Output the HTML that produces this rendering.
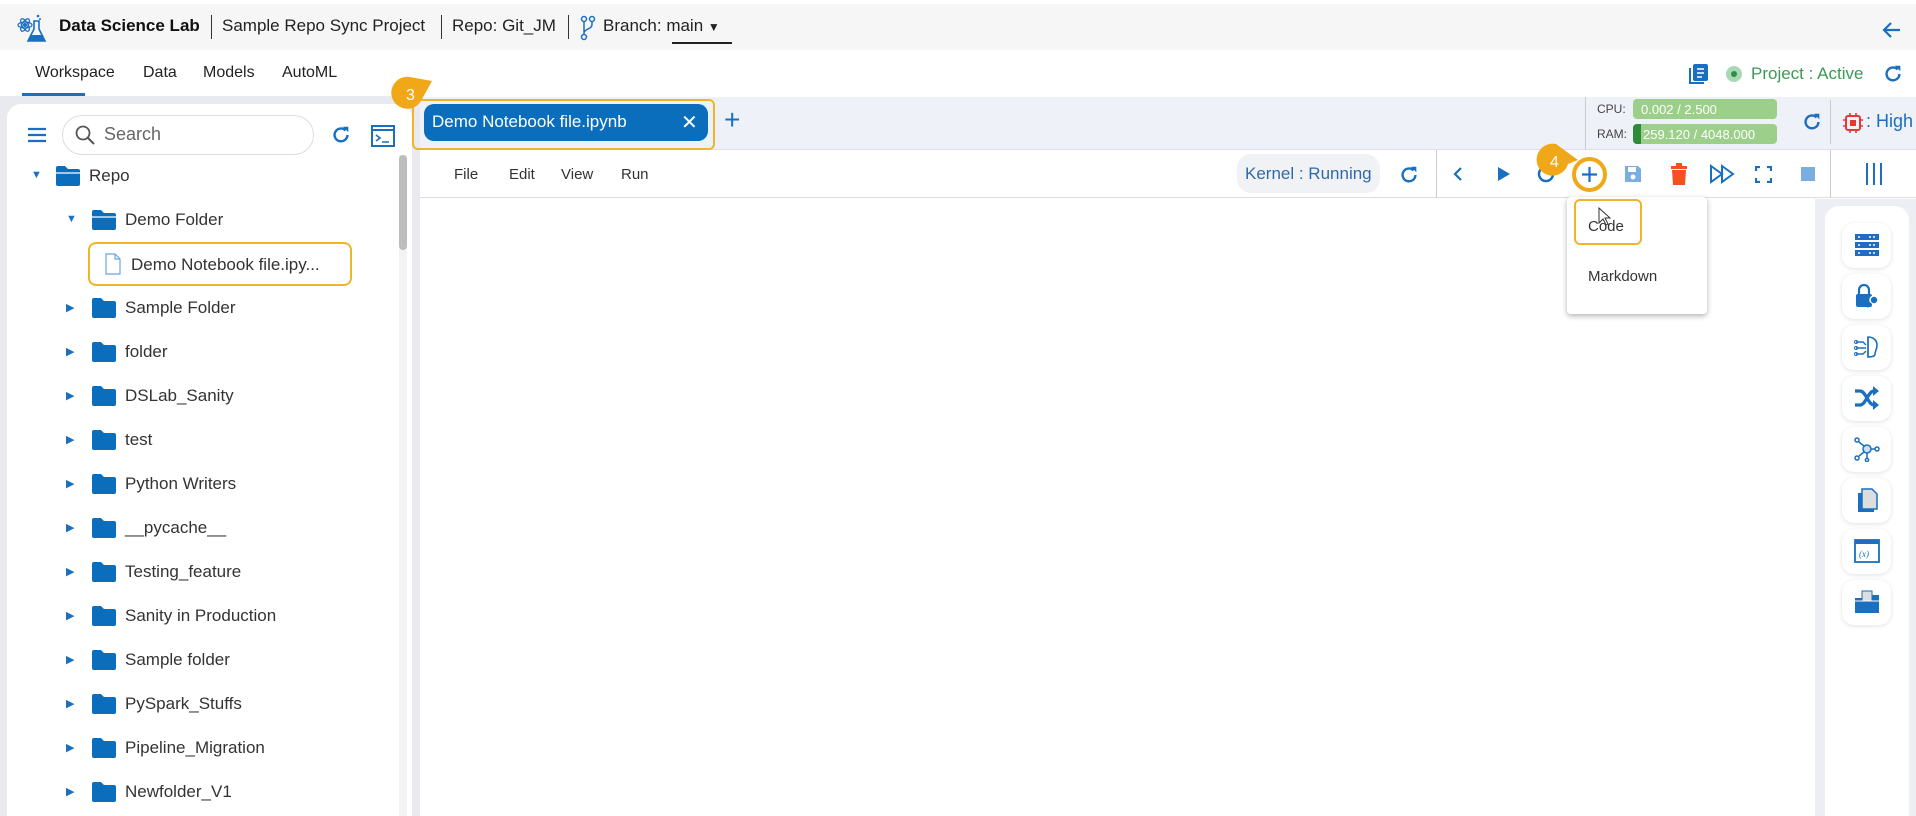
<!DOCTYPE html>
<html style="width:1916px;height:816px;overflow:hidden"><head><meta charset="utf-8"><style>
*{margin:0;padding:0;box-sizing:border-box}
body{width:1916px;height:816px;overflow:hidden;background:#e8eaef;font-family:"Liberation Sans",sans-serif;color:#333;position:relative}
.a{position:absolute}
.t{position:absolute;white-space:nowrap}
</style></head><body>
<!-- top bar -->
<div class="a" style="left:0;top:0;width:1916px;height:4px;background:#fff"></div>
<div class="a" style="left:0;top:4px;width:1916px;height:46px;background:#f6f6f7"></div>
<svg class="a" style="left:16px;top:13px" width="32" height="32" viewBox="0 0 32 32">
<circle cx="9" cy="12" r="2" fill="#1a6fc0"/><ellipse cx="9" cy="12" rx="7" ry="3" fill="none" stroke="#1a6fc0" stroke-width="1.2"/><ellipse cx="9" cy="12" rx="7" ry="3" transform="rotate(60 9 12)" fill="none" stroke="#1a6fc0" stroke-width="1.2"/><ellipse cx="9" cy="12" rx="7" ry="3" transform="rotate(-60 9 12)" fill="none" stroke="#1a6fc0" stroke-width="1.2"/>
<path d="M18 8v8l-6 12h17l-6-12V8z" fill="none" stroke="#1a6fc0" stroke-width="1.6"/><path d="M14 22h13l2 6H12z" fill="#1a6fc0"/><circle cx="22" cy="3" r="1.3" fill="#1a6fc0"/><circle cx="24" cy="6" r="1" fill="#1a6fc0"/></svg>
<div class="t" style="left:59px;top:16px;font-size:17px;font-weight:bold;color:#111">Data Science Lab</div>
<div class="a" style="left:211px;top:15px;width:1px;height:24px;background:#333"></div>
<div class="t" style="left:222px;top:16px;font-size:17px;color:#222">Sample Repo Sync Project</div>
<div class="a" style="left:441px;top:15px;width:1px;height:24px;background:#333"></div>
<div class="t" style="left:452px;top:16px;font-size:17px;color:#222">Repo: Git_JM</div>
<div class="a" style="left:568px;top:15px;width:1px;height:24px;background:#333"></div>
<svg class="a" style="left:580px;top:15px" width="16" height="26" viewBox="0 0 16 26"><circle cx="4" cy="4" r="2.5" fill="none" stroke="#1a6fc0" stroke-width="1.5"/><circle cx="12" cy="4" r="2.5" fill="none" stroke="#1a6fc0" stroke-width="1.5"/><circle cx="4" cy="22" r="2.5" fill="none" stroke="#1a6fc0" stroke-width="1.5"/><path d="M4 6.5v13M12 6.5v3c0 5-8 4-8 9" fill="none" stroke="#1a6fc0" stroke-width="1.5"/></svg>
<div class="t" style="left:603px;top:16px;font-size:17px;color:#222">Branch: <span>main</span> <span style="font-size:12px">▼</span></div>
<div class="a" style="left:672px;top:42px;width:60px;height:2px;background:#222"></div>
<svg class="a" style="left:1880px;top:18px" width="24" height="24" viewBox="0 0 24 24"><path d="M20 12H5M11 5l-7 7 7 7" fill="none" stroke="#1a6fc0" stroke-width="2.2"/></svg>
<!-- nav -->
<div class="a" style="left:0;top:50px;width:1916px;height:46px;background:#fff"></div>
<div class="t" style="left:35px;top:64px;font-size:16px;color:#222">Workspace</div>
<div class="t" style="left:143px;top:64px;font-size:16px;color:#222">Data</div>
<div class="t" style="left:203px;top:64px;font-size:16px;color:#222">Models</div>
<div class="t" style="left:282px;top:64px;font-size:16px;color:#222">AutoML</div>
<div class="a" style="left:22px;top:93px;width:63px;height:3px;background:#1a6fc0"></div>
<svg class="a" style="left:1688px;top:62px" width="22" height="24" viewBox="0 0 22 24"><rect x="5" y="2" width="15" height="17" rx="2" fill="#1a6fc0"/><path d="M2 6v15h14" fill="none" stroke="#1a6fc0" stroke-width="2"/><path d="M9 7h7M9 11h7M9 15h5" stroke="#fff" stroke-width="1.5"/></svg>
<div class="a" style="left:1726px;top:66px;width:16px;height:16px;border-radius:50%;background:#a8d8b4"></div>
<div class="a" style="left:1731px;top:71px;width:6px;height:6px;border-radius:50%;background:#2e8b4a"></div>
<div class="t" style="left:1751px;top:64px;font-size:17px;color:#3a9a55">Project : Active</div>
<svg class="a" style="left:1882px;top:63px" width="22" height="22" viewBox="0 0 24 24"><path d="M19 12a7 7 0 1 1-2-5" fill="none" stroke="#1a6fc0" stroke-width="2.6"/><path d="M14 3h6v6z" fill="#1a6fc0"/></svg>
<!-- left panel -->
<div class="a" style="left:7px;top:104px;width:405px;height:712px;background:#fff;border-radius:14px 14px 0 0"></div>
<svg class="a" style="left:27px;top:127px" width="20" height="16"><path d="M1 2h18M1 8h18M1 14h18" stroke="#1a6fc0" stroke-width="2.2"/></svg>
<div class="a" style="left:62px;top:115px;width:252px;height:40px;border:1px solid #ddd;border-radius:20px"></div>
<svg class="a" style="left:74px;top:124px" width="22" height="22" viewBox="0 0 22 22"><circle cx="9" cy="9" r="6.5" fill="none" stroke="#555" stroke-width="1.8"/><path d="M14 14l6 6" stroke="#555" stroke-width="2"/></svg>
<div class="t" style="left:104px;top:124px;font-size:18px;color:#666">Search</div>
<svg class="a" style="left:330px;top:124px" width="22" height="22" viewBox="0 0 24 24"><path d="M19 12a7 7 0 1 1-2-5" fill="none" stroke="#1a6fc0" stroke-width="2.6"/><path d="M14 3h6v6z" fill="#1a6fc0"/></svg>
<svg class="a" style="left:371px;top:125px" width="24" height="22" viewBox="0 0 24 22"><rect x="1" y="1" width="22" height="20" fill="none" stroke="#1a6fc0" stroke-width="2"/><path d="M1 5h22" stroke="#1a6fc0" stroke-width="2"/><path d="M5 10l4 3-4 3M11 17h7" fill="none" stroke="#1a6fc0" stroke-width="1.6"/></svg>
<div class="a" style="left:399px;top:155px;width:8px;height:661px;background:#f3f3f4"></div>
<div class="a" style="left:399px;top:155px;width:8px;height:95px;background:#bdbdbd;border-radius:4px"></div>
<div id="tree"></div>
<div class="a" style="left:88px;top:242px;width:264px;height:44px;border:2px solid #f0b429;border-radius:8px"></div>
<svg class="a" style="left:105px;top:253px" width="16" height="22" viewBox="0 0 16 22"><path d="M1 1h9l5 5v15H1z M10 1v5h5" fill="none" stroke="#6aa6dc" stroke-width="1.2"/></svg>
<div class="t" style="left:131px;top:255px;font-size:17px;color:#333">Demo Notebook file.ipy...</div>
<!-- main panel -->
<div class="a" style="left:420px;top:96px;width:1496px;height:720px;background:#fff"></div>
<div class="a" style="left:420px;top:97px;width:1496px;height:53px;background:#eef1f8;border-bottom:1px solid #dde"></div>
<div class="a" style="left:412px;top:99px;width:303px;height:51px;border:2px solid #f0b429;border-radius:6px"></div>
<div class="a" style="left:424px;top:104px;width:284px;height:37px;background:#0a6ebd;border-radius:10px"></div>
<div class="t" style="left:432px;top:112px;font-size:17px;color:#fff">Demo Notebook file.ipynb</div>
<div class="t" style="left:681px;top:110px;font-size:20px;color:#fff">✕</div>
<div class="t" style="left:724px;top:104px;font-size:28px;color:#1a6fc0">+</div>
<svg class="a" style="left:388px;top:75px" width="50" height="38" viewBox="0 0 50 38"><path d="M22 2 L44 6 L34 24 A16 16 0 1 1 22 2z" fill="#f0a818"/><text x="18" y="25" font-size="16" fill="#fff" font-family="Liberation Sans">3</text></svg>
<div class="a" style="left:1585px;top:97px;width:1px;height:53px;background:#ccc"></div>
<div class="t" style="left:1597px;top:102px;font-size:12px;color:#444">CPU:</div>
<div class="t" style="left:1597px;top:127px;font-size:12px;color:#444">RAM:</div>
<div class="a" style="left:1633px;top:99px;width:144px;height:20px;background:#9ccf8a;border-radius:4px"></div>
<div class="a" style="left:1633px;top:124px;width:144px;height:20px;background:#9ccf8a;border-radius:4px"></div>
<div class="a" style="left:1633px;top:124px;width:8px;height:20px;background:#2e8b3a;border-radius:4px 0 0 4px"></div>
<div class="t" style="left:1641px;top:102px;font-size:13px;color:#fff">0.002 / 2.500</div>
<div class="t" style="left:1643px;top:127px;font-size:13px;color:#fff">259.120 / 4048.000</div>
<svg class="a" style="left:1801px;top:111px" width="22" height="22" viewBox="0 0 24 24"><path d="M19 12a7 7 0 1 1-2-5" fill="none" stroke="#1a6fc0" stroke-width="2.6"/><path d="M14 3h6v6z" fill="#1a6fc0"/></svg>
<div class="a" style="left:1830px;top:100px;width:1px;height:44px;background:#ccc"></div>
<svg class="a" style="left:1842px;top:112px" width="22" height="22" viewBox="0 0 22 22"><rect x="4" y="4" width="14" height="14" rx="2" fill="none" stroke="#e53935" stroke-width="2"/><rect x="8" y="8" width="6" height="6" fill="#e53935"/><path d="M8 1v3M14 1v3M8 18v3M14 18v3M1 8h3M1 14h3M18 8h3M18 14h3" stroke="#e53935" stroke-width="1.6"/></svg>
<div class="t" style="left:1866px;top:111px;font-size:18px;color:#1a6fc0">: High</div>
<!-- menu row -->
<div class="a" style="left:420px;top:150px;width:1496px;height:48px;background:#fff;border-bottom:1px solid #ddd"></div>
<div class="t" style="left:454px;top:166px;font-size:15px;color:#333">File</div>
<div class="t" style="left:509px;top:166px;font-size:15px;color:#333">Edit</div>
<div class="t" style="left:561px;top:166px;font-size:15px;color:#333">View</div>
<div class="t" style="left:621px;top:166px;font-size:15px;color:#333">Run</div>
<div class="a" style="left:1237px;top:154px;width:143px;height:39px;background:#f1f2f6;border-radius:14px"></div>
<div class="t" style="left:1245px;top:164px;font-size:17px;color:#2f6aa8">Kernel : Running</div>
<svg class="a" style="left:1398px;top:164px" width="22" height="22" viewBox="0 0 24 24"><path d="M19 12a7 7 0 1 1-2-5" fill="none" stroke="#1a6fc0" stroke-width="2.6"/><path d="M14 3h6v6z" fill="#1a6fc0"/></svg>
<div class="a" style="left:1436px;top:150px;width:1px;height:48px;background:#ccc"></div>
<div class="a" style="left:1830px;top:150px;width:1px;height:48px;background:#ccc"></div>
<svg class="a" style="left:1450px;top:165px" width="16" height="18"><path d="M11 3l-6 6 6 6" fill="none" stroke="#1a6fc0" stroke-width="2.2"/></svg>
<svg class="a" style="left:1495px;top:165px" width="16" height="18"><path d="M3 2l12 7-12 7z" fill="#1a6fc0"/></svg>
<svg class="a" style="left:1536px;top:164px" width="20" height="20"><circle cx="10" cy="10" r="7" fill="none" stroke="#1a6fc0" stroke-width="2.5"/></svg>
<svg class="a" style="left:1532px;top:140px" width="50" height="42" viewBox="0 0 50 42"><path d="M24 4 L46 20 L36 24 A16 16 0 1 1 24 4z" fill="#f0a818"/><text x="18" y="27" font-size="16" fill="#fff" font-family="Liberation Sans">4</text></svg>
<div class="a" style="left:1572px;top:157px;width:35px;height:35px;border:4px solid #f0a818;border-radius:50%;background:#fff"></div>
<svg class="a" style="left:1580px;top:165px" width="19" height="19"><path d="M9.5 2v15M2 9.5h15" stroke="#1a6fc0" stroke-width="2.2"/></svg>
<svg class="a" style="left:1623px;top:164px" width="20" height="20" viewBox="0 0 20 20"><path d="M2 2h13l3 3v13H2z" fill="#7aaee0"/><rect x="5" y="3" width="8" height="5" fill="#fff"/><circle cx="10" cy="13" r="2.5" fill="#fff"/></svg>
<svg class="a" style="left:1670px;top:163px" width="18" height="22" viewBox="0 0 18 22"><rect x="1" y="3" width="16" height="3" fill="#f4511e"/><rect x="6" y="0" width="6" height="3" fill="#f4511e"/><path d="M2 7h14l-1 15H3z" fill="#f4511e"/></svg>
<svg class="a" style="left:1709px;top:164px" width="26" height="20" viewBox="0 0 26 20"><path d="M2 2l11 8-11 8zM13 2l11 8-11 8z" fill="none" stroke="#1a6fc0" stroke-width="2"/></svg>
<svg class="a" style="left:1755px;top:166px" width="17" height="17"><path d="M1 5V1h4M12 1h4v4M16 12v4h-4M5 16H1v-4" fill="none" stroke="#1a6fc0" stroke-width="2.2"/></svg>
<div class="a" style="left:1801px;top:167px;width:14px;height:14px;background:#7aaee0"></div>
<svg class="a" style="left:1864px;top:162px" width="20" height="24"><path d="M3 1v22M10 1v22M17 1v22" stroke="#1a6fc0" stroke-width="2"/></svg>
<!-- notebook + sidebar -->
<div class="a" style="left:1815px;top:199px;width:101px;height:617px;background:#eceef4"></div>
<div class="a" style="left:1825px;top:206px;width:84px;height:610px;background:#fff;border-radius:14px 14px 0 0"></div>
<div id="side"></div>
<!-- dropdown -->
<div class="a" style="left:1567px;top:197px;width:140px;height:117px;background:#fff;border-radius:4px;box-shadow:0 2px 6px rgba(0,0,0,.3)"></div>
<div class="a" style="left:1574px;top:199px;width:68px;height:46px;border:2px solid #f0b429;border-radius:6px"></div>
<div class="t" style="left:1588px;top:218px;font-size:15px;color:#333">Code</div>
<div class="t" style="left:1588px;top:268px;font-size:15px;color:#333">Markdown</div>
<svg class="a" style="left:1598px;top:207px" width="14" height="20"><path d="M1 1v15l4-4 3 6 2-1-3-6h5z" fill="#fff" stroke="#333" stroke-width="1"/></svg>
<script>
var tr=document.getElementById('tree'),h='';
var items=[["Repo",0,1],["Demo Folder",1,1],null,["Sample Folder",1],["folder",1],["DSLab_Sanity",1],["test",1],["Python Writers",1],["__pycache__",1],["Testing_feature",1],["Sanity in Production",1],["Sample folder",1],["PySpark_Stuffs",1],["Pipeline_Migration",1],["Newfolder_V1",1]];
items.forEach(function(it,i){if(!it)return;var y=177+44*i,l=it[1],ax=l?66:31,fx=l?92:56,tx=l?125:89;
h+='<div class="t" style="left:'+ax+'px;top:'+(y-8)+'px;font-size:11px;color:#1a6fc0">'+(it[2]?'▼':'▶')+'</div>';
h+='<svg class="a" style="left:'+fx+'px;top:'+(y-11)+'px" width="24" height="20" viewBox="0 0 24 20"><path d="M0 2a2 2 0 0 1 2-2h7l3 3h10a2 2 0 0 1 2 2v13a2 2 0 0 1-2 2H2a2 2 0 0 1-2-2z" fill="#0a6ebd"/>'+(it[2]?'<path d="M0 7h24" stroke="#fff" stroke-width="1.2"/>':'')+'</svg>';
h+='<div class="t" style="left:'+tx+'px;top:'+(y-11)+'px;font-size:17px;color:#333">'+it[0]+'</div>';});
tr.innerHTML=h;
var B='#1a6fc0';
var icons=[
'<rect x="1" y="2" width="24" height="6" fill="'+B+'"/><rect x="1" y="10" width="24" height="6" fill="'+B+'"/><rect x="1" y="18" width="24" height="6" fill="'+B+'"/><g fill="#fff"><circle cx="5" cy="5" r="1"/><circle cx="16" cy="5" r="1"/><circle cx="20" cy="5" r="1"/><circle cx="5" cy="13" r="1"/><circle cx="16" cy="13" r="1"/><circle cx="20" cy="13" r="1"/><circle cx="5" cy="21" r="1"/><circle cx="16" cy="21" r="1"/><circle cx="20" cy="21" r="1"/></g>',
'<path d="M5 11V7a5 5 0 0 1 10 0v4" fill="none" stroke="'+B+'" stroke-width="2.2"/><rect x="2" y="11" width="16" height="13" rx="2" fill="'+B+'"/><circle cx="20" cy="17" r="4" fill="'+B+'" stroke="#fff" stroke-width="1.5"/><path d="M17 20l-4 4" stroke="'+B+'" stroke-width="2.5"/>',
'<path d="M14 3c5 0 9 3 9 8s-2 6-2 9c0 2-3 3-7 3z" fill="none" stroke="'+B+'" stroke-width="1.6"/><path d="M14 3v20M2 8h7l3 3M2 14h10M2 20h7l3-3" fill="none" stroke="'+B+'" stroke-width="1.4"/><circle cx="2" cy="8" r="1.5" fill="none" stroke="'+B+'"/><circle cx="2" cy="14" r="1.5" fill="none" stroke="'+B+'"/><circle cx="2" cy="20" r="1.5" fill="none" stroke="'+B+'"/>',
'<path d="M1 6h5c6 0 8 14 14 14h2M1 20h5c6 0 8-14 14-14h2" fill="none" stroke="'+B+'" stroke-width="3.2"/><path d="M19 1l6 5-6 5zM19 15l6 5-6 5z" fill="'+B+'"/>',
'<circle cx="13" cy="13" r="4" fill="#cfe0f3" stroke="'+B+'" stroke-width="1.5"/><g fill="none" stroke="'+B+'" stroke-width="1.5"><circle cx="3" cy="4" r="2"/><circle cx="3" cy="22" r="2"/><circle cx="23" cy="13" r="2"/><circle cx="13" cy="24" r="1.6"/><path d="M5 6l5 4M5 20l5-4M17 13h4M13 17v5"/></g>',
'<path d="M4 6h12l4 4v15H4z" fill="'+B+'"/><path d="M8 2h10l5 5v15H8z" fill="#ddd" stroke="'+B+'" stroke-width="1.5"/>',
'<rect x="1" y="2" width="24" height="22" fill="none" stroke="'+B+'" stroke-width="1.8"/><rect x="1" y="2" width="24" height="4" fill="'+B+'"/><text x="5" y="19" font-size="9" font-style="italic" fill="'+B+'" font-family="Liberation Serif">(x)</text>',
'<path d="M1 9h9l2-3h13v18H1z" fill="'+B+'"/><rect x="8" y="2" width="10" height="10" fill="#ddd" stroke="'+B+'"/><path d="M1 12h24" stroke="#fff" stroke-width="1"/>'];
var s='';for(var i=0;i<8;i++){var y=223+51*i;s+='<div class="a" style="left:1842px;top:'+y+'px;width:49px;height:45px;background:#fff;border-radius:12px;box-shadow:0 1px 4px rgba(0,0,0,.12)"></div><svg class="a" style="left:1854px;top:'+(y+9)+'px" width="26" height="26" viewBox="0 0 26 26">'+icons[i]+'</svg>';}
document.getElementById('side').innerHTML=s;
</script>
</body></html>
